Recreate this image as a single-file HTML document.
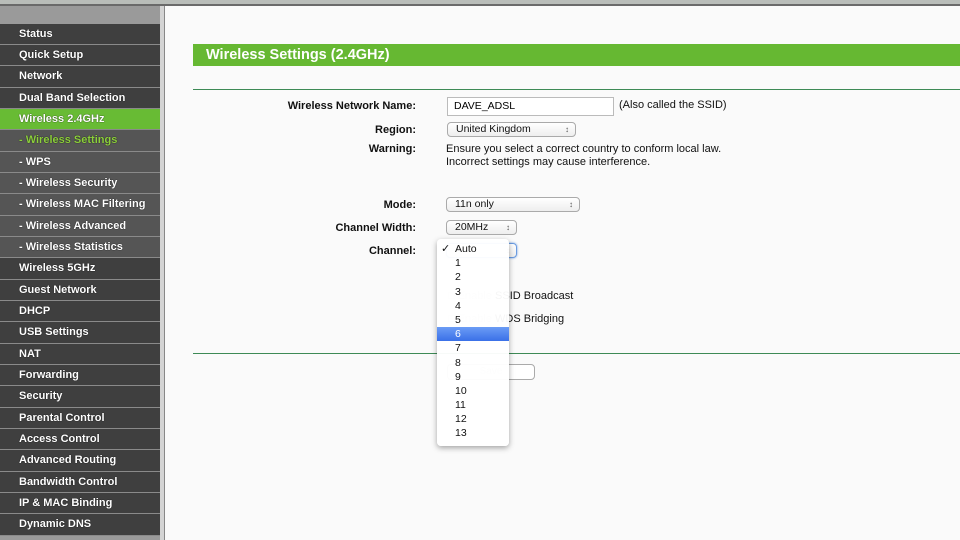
<!DOCTYPE html>
<html><head><meta charset="utf-8"><style>
*{margin:0;padding:0;box-sizing:border-box}
body{width:960px;height:540px;overflow:hidden;background:#fafafa;font-family:"Liberation Sans",Arial,sans-serif;position:relative}
.top{position:absolute;left:0;top:0;width:960px;height:6px;background:#b9bdb9;border-bottom:2px solid #6a6a6a}
.side{position:absolute;left:0;top:6px;width:160px;height:534px;background:#9a9a9a}
.bar{position:absolute;left:160px;top:6px;width:5px;height:534px;background:#d4d4d4;border-right:1px solid #888}
.menu{position:absolute;left:0;top:23.5px;width:160px}
.menu div{height:21.35px;line-height:20px;border-bottom:1.3px solid #8a8a8a;background:#3f3f3f;color:#fff;font-weight:bold;font-size:11px;padding-left:19px;text-shadow:0 0 1px #000}
.menu div.sub{background:#555}
.menu div.act{background:#68bb34}
.menu div.cur{color:#8ccf3c}
.g{position:absolute;left:193px;top:44px;width:767px;height:22px;background:#66b832;color:#fff;font-weight:bold;font-size:14.5px;line-height:22px;padding-left:13px}
.hl{position:absolute;left:193px;width:767px;height:1px;background:#3d8a55}
.lab{position:absolute;right:544px;font-size:11px;font-weight:bold;color:#111}
.t{position:absolute;font-size:11px;color:#111}
.sel{position:absolute;height:15px;border:1px solid #aaa;border-radius:4px;background:linear-gradient(#fff,#eee);font-size:10.5px;line-height:13px;padding-left:8px;color:#111}
.sel:after{content:"\2195";position:absolute;right:6px;top:0;font-size:8px;color:#555}
.dd{position:absolute;left:437px;top:239px;width:72px;height:207px;background:rgba(255,255,255,0.96);border-radius:4px;box-shadow:0 2px 6px rgba(0,0,0,.35);padding-top:3px}
.dd div{height:14.2px;line-height:14px;font-size:10.5px;padding-left:18px;color:#111}
.dd div.h{background:linear-gradient(#6b9cf5,#3a70e8);color:#fff}
</style></head><body>
<div class="top"></div>
<div class="side"></div>
<div class="bar"></div>
<div class="menu">
<div>Status</div><div>Quick Setup</div><div>Network</div><div>Dual Band Selection</div>
<div class="act">Wireless 2.4GHz</div>
<div class="sub cur">- Wireless Settings</div><div class="sub">- WPS</div><div class="sub">- Wireless Security</div><div class="sub">- Wireless MAC Filtering</div><div class="sub">- Wireless Advanced</div><div class="sub">- Wireless Statistics</div>
<div>Wireless 5GHz</div><div>Guest Network</div><div>DHCP</div><div>USB Settings</div><div>NAT</div><div>Forwarding</div><div>Security</div><div>Parental Control</div><div>Access Control</div><div>Advanced Routing</div><div>Bandwidth Control</div><div>IP &amp; MAC Binding</div><div>Dynamic DNS</div>
</div>
<div class="g">Wireless Settings (2.4GHz)</div>
<div class="hl" style="top:89px"></div>
<div class="hl" style="top:353px"></div>
<div class="lab" style="top:100px">Wireless Network Name:</div>
<div style="position:absolute;left:447px;top:97px;width:167px;height:19px;border:1px solid #bbb;background:#fff;font-size:10.5px;line-height:17px;padding-left:6px">DAVE_ADSL</div>
<div class="t" style="left:619px;top:99px">(Also called the SSID)</div>
<div class="lab" style="top:124px">Region:</div>
<div class="sel" style="left:447px;top:122px;width:129px">United Kingdom</div>
<div class="lab" style="top:143px">Warning:</div>
<div class="t" style="left:446px;top:143px;line-height:13px">Ensure you select a correct country to conform local law.<br>Incorrect settings may cause interference.</div>
<div class="lab" style="top:199px">Mode:</div>
<div class="sel" style="left:446px;top:197px;width:134px">11n only</div>
<div class="lab" style="top:222px">Channel Width:</div>
<div class="sel" style="left:446px;top:220px;width:71px">20MHz</div>
<div class="lab" style="top:245px">Channel:</div>
<div class="sel" style="left:446px;top:243px;width:71px;border-color:#6a9be0;box-shadow:0 0 2px #6a9be0"></div>
<div class="t" style="left:448px;top:290px;color:#bbb">&#9633; Enable <span style="color:#111">SSID Broadcast</span></div>
<div class="t" style="left:448px;top:313px;color:#bbb">&#9633; Enable <span style="color:#111">WDS Bridging</span></div>
<div style="position:absolute;left:447px;top:364px;width:88px;height:16px;border:1px solid #aaa;border-radius:4px;background:#fff;font-size:10px;color:#bbb;text-align:center;line-height:14px">Save</div>
<div class="dd">
<div>Auto<span style="position:absolute;left:4px;font-size:11px">&#10003;</span></div>
<div>1</div><div>2</div><div>3</div><div>4</div><div>5</div><div class="h">6</div><div>7</div><div>8</div><div>9</div><div>10</div><div>11</div><div>12</div><div>13</div>
</div>
</body></html>
